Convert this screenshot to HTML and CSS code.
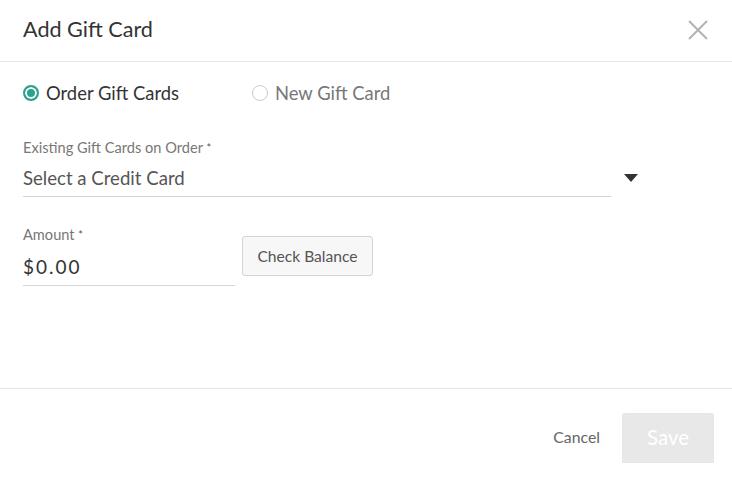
FILE: index.html
```html
<!DOCTYPE html>
<html>
<head>
<meta charset="utf-8">
<link rel="stylesheet" href="styles.css">
</head>
<body>
<div class="modal">
  <header class="modal-header">
    <h1 class="title">Add Gift Card</h1>
    <button class="close" aria-label="Close">
      <svg width="20" height="20" viewBox="0 0 20 20"><path d="M1 1L19 19M19 1L1 19" stroke="#b3b3b3" stroke-width="2" fill="none"/></svg>
    </button>
  </header>
  <main class="modal-body">
    <div class="radios">
      <label class="radio checked"><span class="dot"></span>Order Gift Cards</label>
      <label class="radio"><span class="dot"></span>New Gift Card</label>
    </div>
    <div class="select-row">
      <div class="field select-field">
        <div class="label">Existing Gift Cards on Order <span class="req">*</span></div>
        <div class="value muted">Select a Credit Card</div>
      </div>
      <span class="caret"></span>
    </div>
    <div class="amount-row">
      <div class="field amount-field">
        <div class="label">Amount <span class="req">*</span></div>
        <div class="value amount">$0.00</div>
      </div>
      <button class="check">Check Balance</button>
    </div>
  </main>
  <footer class="modal-footer">
    <button class="cancel">Cancel</button>
    <button class="save">Save</button>
  </footer>
</div>
</body>
</html>
```
FILE: styles.css
```css
* { box-sizing: border-box; }
html, body { margin: 0; padding: 0; background: #fff; }
body { font-family: Lato, "Open Sans", sans-serif; color: #333; width: 732px; height: 478px; overflow: hidden; }
.modal { width: 732px; height: 478px; display: flex; flex-direction: column; }
.modal-header { height: 62px; border-bottom: 1px solid #e6e6e6; display: flex; align-items: center; justify-content: space-between; padding: 0 23px 4px 23px; }
.title { margin: 0; font-size: 21.6px; font-weight: 400; color: #333; }
.close { border: 0; background: none; padding: 0; margin: 2px 1px 0 0; width: 20px; height: 20px; display: flex; }
.modal-body { height: 327px; padding: 0 23px; border-bottom: 1px solid #e6e6e6; }
.radios { display: flex; margin-top: 20px; height: 22px; align-items: center; }
.radio { display: flex; align-items: center; font-size: 18.4px; color: #777; }
.radio:first-child { width: 229px; color: #333; }
.dot { width: 16px; height: 16px; border-radius: 50%; border: 1px solid #ccc; margin-right: 7px; display: inline-block; background: #fff; }
.checked .dot { border: 2px solid #2aa28f; background: #2aa28f; box-shadow: inset 0 0 0 2px #fff; }
.select-row { display: flex; align-items: flex-start; margin-top: 36px; }
.field { display: flex; flex-direction: column; border-bottom: 1px solid #d6d6d6; }
.select-field { width: 588px; }
.label { font-size: 14.6px; color: #777; height: 16px; line-height: 16px; }
.req { color: #555; font-size: 11px; vertical-align: top; }
.value { font-size: 18.6px; color: #333; height: 40px; line-height: 24px; padding-top: 10px; }
.value.muted { color: #555; }
.value.amount { height: 42px; padding-top: 12px; letter-spacing: 2px; font-size: 19px; }
.caret { width: 0; height: 0; border-left: 7px solid transparent; border-right: 7px solid transparent; border-top: 8px solid #333; margin: 34px 0 0 13px; }
.amount-row { display: flex; align-items: flex-start; margin-top: 30px; }
.amount-field { width: 212px; }
.check { margin: 9px 0 0 7px; height: 40px; width: 131px; border: 1px solid #d4d4d4; border-radius: 3px; background: #f7f7f7; font-family: inherit; font-size: 15.6px; color: #555; padding: 0; }
.modal-footer { flex: 1; display: flex; justify-content: flex-end; align-items: flex-start; padding: 24px 18px 0 0; }
.cancel { border: 0; background: none; font-family: inherit; font-size: 15.8px; color: #666; height: 50px; padding: 0 0 4px; margin-right: 22px; }
.save { border: 0; border-radius: 3px 3px 0 0; background: #e8e8e8; color: #fff; font-family: inherit; font-size: 20.4px; width: 92px; height: 50px; padding: 0 0 3px; }
```
